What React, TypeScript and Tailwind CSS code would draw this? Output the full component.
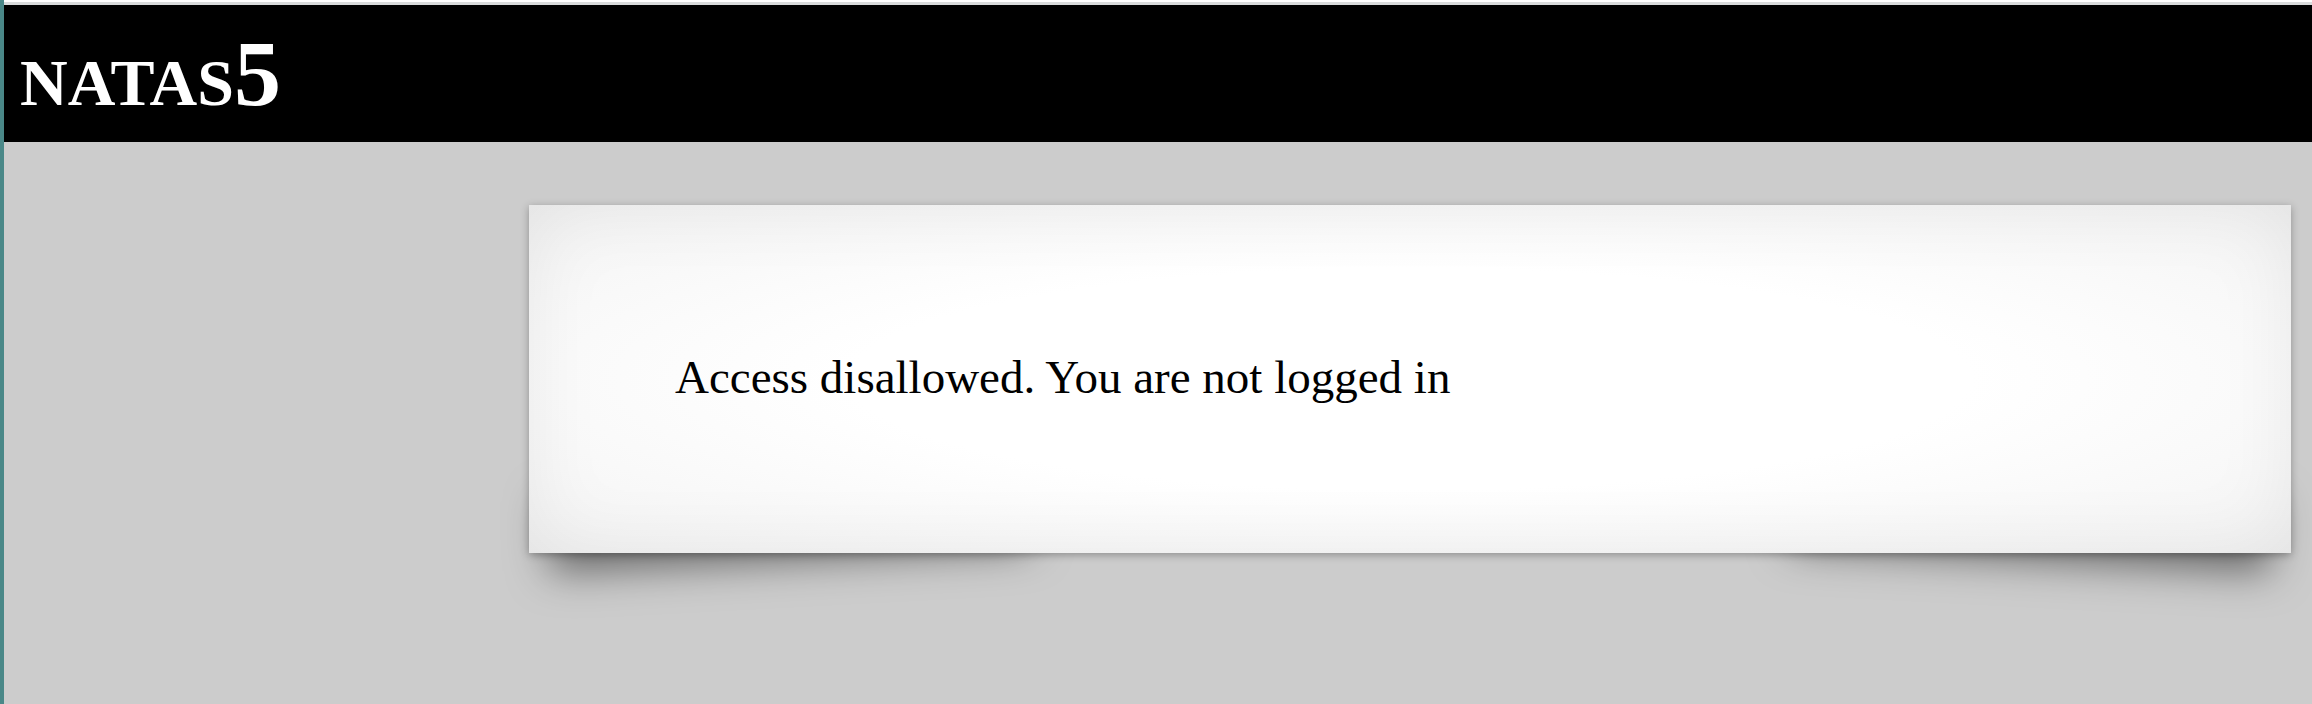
export default function App() {
  return (
    <div className="flex min-h-screen w-full bg-[#cccccc]" style={{ fontFamily: '"Liberation Serif", serif' }}>
      {/* left edge stripe */}
      <div className="w-[4px] shrink-0 bg-[#4a8888]" />

      <div className="flex min-w-0 flex-1 flex-col">
        <div className="h-[2px] bg-white" />
        <div className="h-[3px] bg-[#d9dbdc]" />

        {/* Header */}
        <header className="h-[137px] bg-black pl-[16px] pt-[21px]">
          <h1 className="text-[94px] font-bold leading-none text-white">
            <span className="[font-variant:small-caps]">natas</span>5
          </h1>
        </header>

        {/* Body */}
        <main className="isolate flex-1 pl-[525px] pr-[21px] pt-[63px]">
          <div
            className="relative h-[348px] bg-[radial-gradient(ellipse_at_center,#ffffff_45%,#f3f3f3_100%)] pl-[146px] pt-[149px] shadow-[0_2px_8px_rgba(0,0,0,0.3),inset_0_0_80px_rgba(0,0,0,0.07)] before:absolute before:bottom-[26px] before:left-[18px] before:-z-10 before:h-1/5 before:w-1/2 before:max-w-[480px] before:-rotate-3 before:shadow-[0_32px_40px_rgba(0,0,0,0.5)] before:content-[''] after:absolute after:bottom-[26px] after:right-[18px] after:-z-10 after:h-1/5 after:w-1/2 after:max-w-[480px] after:rotate-3 after:shadow-[0_32px_40px_rgba(0,0,0,0.5)] after:content-['']"
          >
            <p className="text-[47px] leading-none text-black">Access disallowed. You are not logged in</p>
          </div>
        </main>
      </div>
    </div>
  )
}
